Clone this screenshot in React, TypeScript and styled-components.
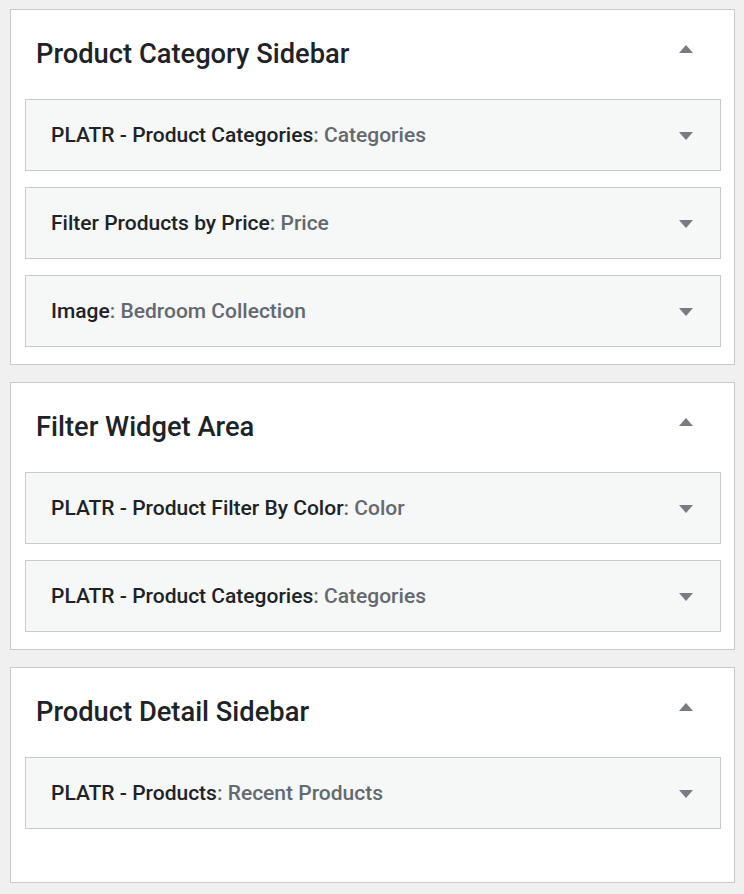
import React from "react";
import styled, { createGlobalStyle } from "styled-components";

const GlobalStyle = createGlobalStyle`
  html, body {
    margin: 0;
    padding: 0;
    background: #f0f0f1;
  }
  body {
    font-family: Roboto, "Noto Sans", "Liberation Sans", sans-serif;
    -webkit-font-smoothing: antialiased;
  }
`;

const Page = styled.div`
  display: flex;
  flex-direction: column;
  gap: 17px;
  padding: 9px 9px 11px 10px;
`;

const Panel = styled.section<{ $extra?: number }>`
  width: 725px;
  box-sizing: border-box;
  background: #fff;
  border: 1px solid #c9cacc;
  padding: 0 13px ${(p) => 17 + (p.$extra ?? 0)}px 14px;
`;

const PanelHeader = styled.div`
  height: 89px;
  display: flex;
  align-items: center;
  justify-content: space-between;
  padding: 0 28px 0 11px;
  box-sizing: border-box;
`;

const PanelTitle = styled.h2`
  margin: 0 0 1px 0;
  font-size: 27.3px;
  font-weight: 500;
  color: #1d2327;
`;

const ToggleButton = styled.button`
  border: 0;
  background: none;
  padding: 0;
  width: 14px;
  height: 14px;
  display: flex;
  align-items: center;
  justify-content: center;
  cursor: pointer;
`;

const ArrowUp = styled.span`
  width: 0;
  height: 0;
  border-left: 7px solid transparent;
  border-right: 7px solid transparent;
  border-bottom: 8px solid #787c82;
  margin-bottom: 12px;
`;

const ArrowDown = styled.span`
  width: 0;
  height: 0;
  border-left: 7px solid transparent;
  border-right: 7px solid transparent;
  border-top: 8px solid #787c82;
  margin-top: 1px;
`;

const WidgetList = styled.div`
  display: flex;
  flex-direction: column;
  gap: 16px;
`;

const Widget = styled.div`
  height: 72px;
  box-sizing: border-box;
  background: #f6f7f7;
  border: 1px solid #c9cacc;
  display: flex;
  align-items: center;
  justify-content: space-between;
  padding: 0 27px 0 25px;
`;

const WidgetTitle = styled.h3`
  margin: 0;
  font-size: 21px;
  font-weight: 500;
  color: #1d2327;
`;

const WidgetSub = styled.span`
  color: #646970;
`;

type WidgetData = { name: string; sub: string };
type AreaData = { title: string; widgets: WidgetData[]; extra?: number };

const areas: AreaData[] = [
  {
    title: "Product Category Sidebar",
    widgets: [
      { name: "PLATR - Product Categories", sub: "Categories" },
      { name: "Filter Products by Price", sub: "Price" },
      { name: "Image", sub: "Bedroom Collection" },
    ],
  },
  {
    title: "Filter Widget Area",
    widgets: [
      { name: "PLATR - Product Filter By Color", sub: "Color" },
      { name: "PLATR - Product Categories", sub: "Categories" },
    ],
  },
  {
    title: "Product Detail Sidebar",
    widgets: [{ name: "PLATR - Products", sub: "Recent Products" }],
    extra: 36,
  },
];

export default function App() {
  return (
    <>
      <GlobalStyle />
      <Page>
        {areas.map((a) => (
          <Panel key={a.title} $extra={a.extra}>
            <PanelHeader>
              <PanelTitle>{a.title}</PanelTitle>
              <ToggleButton aria-label="Toggle">
                <ArrowUp />
              </ToggleButton>
            </PanelHeader>
            <WidgetList>
              {a.widgets.map((w, i) => (
                <Widget key={i}>
                  <WidgetTitle>
                    {w.name}
                    <WidgetSub>: {w.sub}</WidgetSub>
                  </WidgetTitle>
                  <ToggleButton aria-label="Expand">
                    <ArrowDown />
                  </ToggleButton>
                </Widget>
              ))}
            </WidgetList>
          </Panel>
        ))}
      </Page>
    </>
  );
}
